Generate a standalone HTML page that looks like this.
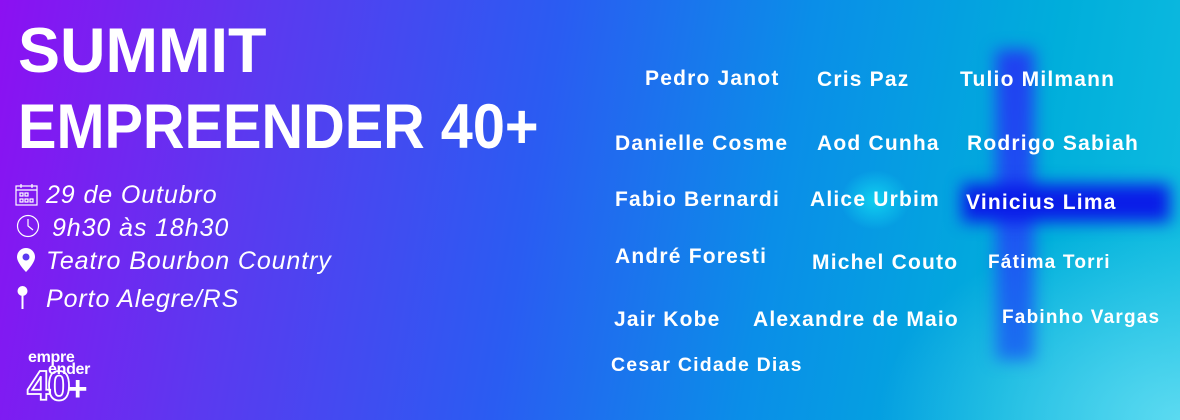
<!DOCTYPE html>
<html><head><meta charset="utf-8"><style>
html,body{margin:0;padding:0}
body{width:1180px;height:420px;overflow:hidden;position:relative;font-family:"Liberation Sans",sans-serif;color:#fff;
background:linear-gradient(100deg,#8c10f2 0%,#5a3af0 22%,#2a5cf2 45%,#0a8ee8 65%,#00aedb 85%,#10bde0 100%);}
.glow{position:absolute;inset:0;background:radial-gradient(ellipse 300px 200px at 1180px 420px,rgba(110,225,245,.8),rgba(110,225,245,0));}
.bar{position:absolute;background:#1a3cf0;filter:blur(8px)}
.t{position:absolute;left:18px;font-weight:bold;font-size:63px;line-height:1;transform-origin:0 0}
.i{position:absolute;left:46px;font-style:italic;font-size:25px;line-height:1;letter-spacing:0.9px}
.n{position:absolute;font-weight:bold;font-size:21px;line-height:1;white-space:nowrap;letter-spacing:1.2px}
svg{position:absolute}
</style></head><body>
<div class="glow"></div>
<div class="bar" style="left:996px;top:50px;width:38px;height:310px;background:linear-gradient(#2040f0,#1e4ff2 50%,#1a70f0);"></div>
<div class="bar" style="left:962px;top:184px;width:208px;height:38px;background:#0a1ce8"></div>
<div style="position:absolute;left:840px;top:170px;width:70px;height:60px;border-radius:50%;background:radial-gradient(#10d0f0,rgba(16,208,240,0) 70%)"></div>

<div class="t" style="top:20px">SUMMIT</div>
<div class="t" style="top:96px;transform:scaleX(0.915)">EMPREENDER 40+</div>

<svg style="left:15px;top:183px" width="24" height="24" viewBox="0 0 24 24" fill="none" stroke="#fff" stroke-width="1.2"><rect x="1" y="3" width="21" height="19"/><line x1="1" y1="7" x2="22" y2="7"/><line x1="6" y1="1" x2="6" y2="5"/><line x1="17" y1="1" x2="17" y2="5"/><rect x="5" y="10" width="3" height="3"/><rect x="10" y="10" width="3" height="3"/><rect x="5" y="16" width="3" height="3"/><rect x="10" y="16" width="3" height="3"/><rect x="15" y="16" width="3" height="3"/></svg>
<div class="i" style="top:183px">29 de Outubro</div>
<svg style="left:16px;top:214px" width="24" height="24" viewBox="0 0 24 24" fill="none" stroke="#fff" stroke-width="1.2"><circle cx="12" cy="12" r="10.5"/><path d="M12 5v7l5 4"/></svg>
<div class="i" style="top:216px;left:52px">9h30 às 18h30</div>
<svg style="left:17px;top:248px" width="18" height="24" viewBox="0 0 18 24"><path d="M9 0C4 0 0 4 0 9c0 6 9 15 9 15s9-9 9-15C18 4 14 0 9 0z" fill="#fff"/><circle cx="9" cy="9" r="3.5" fill="#5a3af0"/></svg>
<div class="i" style="top:249px">Teatro Bourbon Country</div>
<svg style="left:17px;top:286px" width="12" height="24" viewBox="0 0 12 24"><circle cx="5.5" cy="5" r="5" fill="#fff"/><rect x="4.5" y="8" width="2" height="15" fill="#fff"/></svg>
<div class="i" style="top:287px">Porto Alegre/RS</div>

<div style="position:absolute;left:28px;top:352px;font-weight:bold;font-size:16px;line-height:12px;letter-spacing:-0.3px">empre<br><span style="margin-left:20px">ender</span></div>
<div style="position:absolute;left:27px;top:365px;font-weight:bold;font-size:42px;line-height:1;color:transparent;-webkit-text-stroke:1.8px #fff;letter-spacing:-3px">40<span style="color:#fff;-webkit-text-stroke:0;font-size:34px;letter-spacing:0">+</span></div>

<div class="n" style="left:645px;top:68px">Pedro Janot</div>
<div class="n" style="left:817px;top:69px">Cris Paz</div>
<div class="n" style="left:960px;top:69px">Tulio Milmann</div>
<div class="n" style="left:615px;top:133px">Danielle Cosme</div>
<div class="n" style="left:817px;top:133px">Aod Cunha</div>
<div class="n" style="left:967px;top:133px">Rodrigo Sabiah</div>
<div class="n" style="left:615px;top:189px">Fabio Bernardi</div>
<div class="n" style="left:810px;top:189px">Alice Urbim</div>
<div class="n" style="left:966px;top:192px">Vinicius Lima</div>
<div class="n" style="left:615px;top:246px">André Foresti</div>
<div class="n" style="left:812px;top:252px">Michel Couto</div>
<div class="n" style="left:988px;top:253px;font-size:19px">Fátima Torri</div>
<div class="n" style="left:614px;top:309px">Jair Kobe</div>
<div class="n" style="left:753px;top:309px">Alexandre de Maio</div>
<div class="n" style="left:1002px;top:308px;font-size:19px">Fabinho Vargas</div>
<div class="n" style="left:611px;top:356px;font-size:19.5px">Cesar Cidade Dias</div>
</body></html>
